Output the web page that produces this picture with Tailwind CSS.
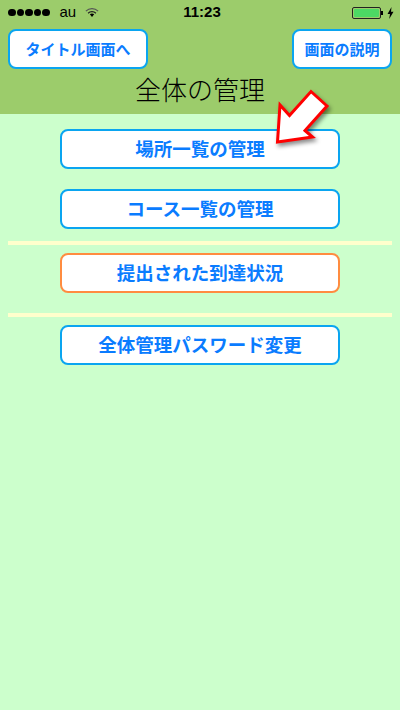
<!DOCTYPE html>
<html>
  <head>
    <meta charset="utf-8" />
    <script src="https://cdn.jsdelivr.net/npm/@tailwindcss/browser@4"></script>
  </head>
  <body class="w-[400px] h-[710px] overflow-hidden bg-[#ccffcc] font-['Noto_Sans_CJK_JP','Liberation_Sans',sans-serif]">
    <div class="relative flex flex-col h-full">
      <!-- Header -->
      <header class="h-[114px] bg-[#9ccc6b] flex flex-col shrink-0">
        <!-- Status bar -->
        <div class="relative h-[29px] pb-[4px] pr-[6px] pl-2 flex items-center text-black font-['Liberation_Sans',sans-serif]">
          <div class="flex gap-px">
            <span class="w-[7.5px] h-[7.5px] rounded-full bg-black"></span>
            <span class="w-[7.5px] h-[7.5px] rounded-full bg-black"></span>
            <span class="w-[7.5px] h-[7.5px] rounded-full bg-black"></span>
            <span class="w-[7.5px] h-[7.5px] rounded-full bg-black"></span>
            <span class="w-[7.5px] h-[7.5px] rounded-full bg-black"></span>
          </div>
          <span class="ml-[10px] text-[15px]">au</span>
          <svg class="ml-[9px]" width="14" height="11" viewBox="0 0 16 12" fill="none">
            <path d="M1 4.5 C5 0.5 11 0.5 15 4.5" stroke="#555" stroke-width="1.4" />
            <path d="M3.5 6.8 C6 4.4 10 4.4 12.5 6.8" stroke="#222" stroke-width="1.4" />
            <path d="M5.5 8 C7 7 9 7 10.5 8 L8 11 Z" fill="#000" />
          </svg>
          <span class="absolute left-[4px] right-0 text-center text-[15px] font-bold">11:23</span>
          <div class="ml-auto flex items-center">
            <div class="w-[29px] h-[12px] border border-[#222] rounded-[2px] p-[1px]">
              <div class="w-full h-full bg-[#4cd964] rounded-[1px]"></div>
            </div>
            <span class="w-[2px] h-[4px] bg-black"></span>
            <svg class="ml-[4px]" width="7" height="12" viewBox="0 0 7 12"><path d="M4.5 0 L0.5 7 H3 L2.2 12 L6.5 4.8 H4 Z" fill="#000" /></svg>
          </div>
        </div>
        <!-- Nav buttons -->
        <div class="flex justify-between px-2">
          <button class="w-[140px] h-10 bg-white border-2 border-[#0aa5f0] rounded-lg text-[#0a7cff] text-[15px] font-bold">タイトル画面へ</button>
          <button class="w-[100px] h-10 bg-white border-2 border-[#0aa5f0] rounded-lg text-[#0a7cff] text-[15px] font-bold">画面の説明</button>
        </div>
        <h1 class="text-center text-[26px] leading-[38px] mt-[1px] text-black font-light">全体の管理</h1>
      </header>

      <!-- Menu -->
      <main class="flex flex-col items-center px-2 pt-[15px]">
        <button class="w-[280px] h-10 bg-white border-2 border-[#0aa5f0] rounded-lg text-[#0a7cff] text-[18.5px] font-bold">場所一覧の管理</button>
        <button class="w-[280px] h-10 mt-5 bg-white border-2 border-[#0aa5f0] rounded-lg text-[#0a7cff] text-[18.5px] font-bold">コース一覧の管理</button>
        <div class="w-full h-1 mt-3 bg-[#ffffcc]"></div>
        <button class="w-[280px] h-10 mt-2 bg-white border-2 border-[#ff8c40] rounded-lg text-[#0a7cff] text-[18.5px] font-bold">提出された到達状況</button>
        <div class="w-full h-1 mt-5 bg-[#ffffcc]"></div>
        <button class="w-[280px] h-10 mt-2 bg-white border-2 border-[#0aa5f0] rounded-lg text-[#0a7cff] text-[18.5px] font-bold">全体管理パスワード変更</button>
      </main>

      <!-- Annotation arrow -->
      <svg class="absolute left-0 top-0 pointer-events-none drop-shadow-[2px_3px_2px_rgba(0,0,0,0.45)]" width="400" height="710" viewBox="0 0 400 710">
        <polygon points="277.5,142 280,105 289.5,115.5 311,91.5 327,106 305,130.5 312.5,137" fill="#fff" stroke="#ff0000" stroke-width="3" stroke-linejoin="miter" />
      </svg>
    </div>
  </body>
</html>
